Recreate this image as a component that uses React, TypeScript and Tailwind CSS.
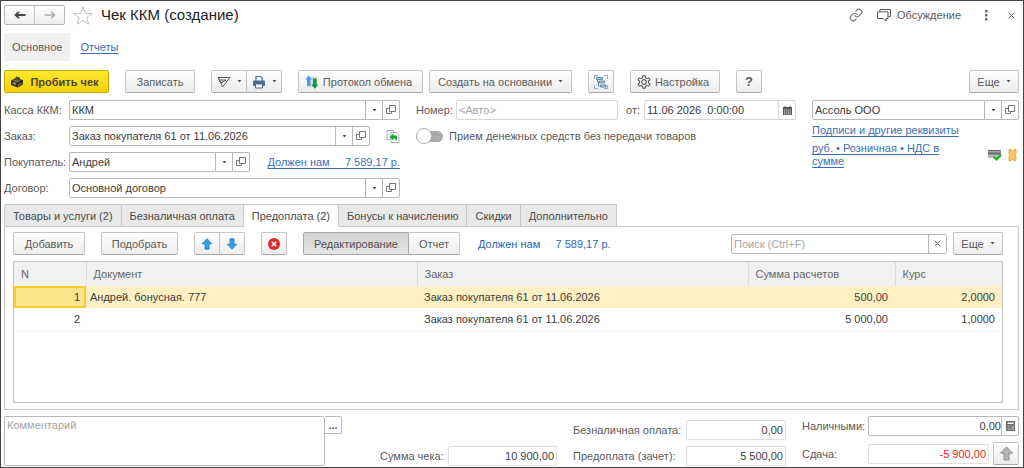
import React from 'react';

interface Row {
  n: number;
  doc: string;
  order: string;
  sum: string;
  rate: string;
}

const rows: Row[] = [
  { n: 1, doc: 'Андрей. бонусная. 777', order: 'Заказ покупателя 61 от 11.06.2026', sum: '500,00', rate: '2,0000' },
  { n: 2, doc: '', order: 'Заказ покупателя 61 от 11.06.2026', sum: '5 000,00', rate: '1,0000' },
];

const tabs = [
  'Товары и услуги (2)',
  'Безналичная оплата',
  'Предоплата (2)',
  'Бонусы к начислению',
  'Скидки',
  'Дополнительно',
];

const btn =
  'flex h-[23px] shrink-0 items-center justify-center rounded-xs border border-[#c4c4c4] border-b-[#a8a8a8] bg-linear-to-b from-white to-[#ececec] text-[#5a5a5a] whitespace-nowrap';

const Caret = () => (
  <svg viewBox="0 0 5 3" className="h-[3px] w-[5px] shrink-0" fill="#555">
    <path d="M.5 0h4L2.500 2.500z" />
  </svg>
);

const OpenIcon = () => (
  <svg viewBox="0 0 10 10" className="h-[10px] w-[10px]" fill="none" stroke="#777">
    <path d="M3.500 .5h6v6h-6zM3.500 3.500h-3v5h5v-2" />
  </svg>
);

const PrinterIcon = () => (
  <svg viewBox="0 0 14 14" className="h-[14px] w-[14px]">
    <path d="M4 6V1.500h4.500L10.500 3.500V6" fill="#fff" stroke="#4b6d93" strokeWidth="1.200" />
    <rect x="1" y="5.500" width="12" height="5.500" rx="1" fill="#4b6d93" />
    <path d="M3.500 9h7v4h-7z" fill="#fff" stroke="#4b6d93" />
  </svg>
);

const ReceiptPrinterIcon = () => (
  <svg viewBox="0 0 14 12" className="h-[12px] w-[14px]">
    <path d="M1 4.500L6 2l7 2v4.500L7.500 11.500 1 9z" fill="#3a2f1c" />
    <path d="M2.500 4.500l4-1.500 4.500 1.500-4 2z" fill="#6f6553" />
    <path d="M5 3.500l1-3 4 1v3z" fill="#54472c" />
    <circle cx="4.500" cy="7.500" r="1.200" fill="#b9a878" />
    <path d="M8 8.500l4-1.800v1.300L8 10z" fill="#7b6d4b" />
  </svg>
);

const SendIcon = () => (
  <svg viewBox="0 0 14 12" className="h-[12px] w-[14px]" fill="none" stroke="#555" strokeLinejoin="round">
    <path d="M1 1.500h12L5.500 11 4 7zM1 1.500L4 7l5-3H3" />
  </svg>
);

const ExchangeIcon = () => (
  <svg viewBox="0 0 14 14" className="h-[14px] w-[14px]">
    <path d="M2 1.500h10v11H2z" fill="#d5dbe3" />
    <path d="M3.700 .5L7.200 4.500H5.400V11H2V4.500H.2z" fill="#4a9cf0" />
    <path d="M9.800 13.800L6.300 9.500H8V3.500h3.600v6h1.700z" fill="#129a3a" />
  </svg>
);

const StructureIcon = () => (
  <svg viewBox="0 0 14 14" className="h-[14px] w-[14px]" fill="none" stroke="#5f86ad">
    <path d="M.5 4V.5H4M10 .5h3.500V4M.5 10v3.500H4M10 13.500h3.500V10" stroke="#8aa9c6" />
    <path d="M2.500 2.500h6v2h-6zM5.500 6h5v2h-5zM6.500 10h5.500v2h-5.500z" fill="#b8cde2" />
    <path d="M3.500 4.500V7h2M4.500 7v4h2" />
  </svg>
);

const GearIcon = () => (
  <svg viewBox="0 0 24 24" className="h-[14px] w-[14px]" fill="none" stroke="#5a5a5a" strokeWidth="1.900" strokeLinejoin="round">
    <path d="M10 1.500h4l.7 3.300 2.200 1.200 3.200-1 2 3.500-2.500 2.200v2.600l2.500 2.200-2 3.500-3.200-1-2.200 1.200-.7 3.300h-4l-.7-3.300L7.100 18l-3.200 1-2-3.500 2.500-2.200v-2.600L1.900 8.500l2-3.500 3.200 1 2.200-1.200z" />
    <circle cx="12" cy="12" r="4" />
  </svg>
);

const FillIcon = () => (
  <svg viewBox="0 0 14 13" className="h-[13px] w-[14px]">
    <path d="M1 .5h6.500v9H1z" fill="#f4f7fb" stroke="#9eb2c8" />
    <path d="M5 2.500h5.500l2.500 2.500v7.500H5z" fill="#fff" stroke="#9eb2c8" />
    <path d="M3.500 7L7.500 3.500v2h3.500v5H9.500V8.500h-2v2z" fill="#23a32b" />
  </svg>
);

const ArrowIcon = ({ down, gray }: { down?: boolean; gray?: boolean }) => (
  <svg
    viewBox="0 0 12 12"
    className={`${gray ? 'h-[15px] w-[15px]' : 'h-[12px] w-[12px]'} ${down ? 'rotate-180' : ''}`}
    fill={gray ? '#b4b4b4' : '#33a2ea'}
    stroke={gray ? '#8e8e8e' : '#2676b8'}
    strokeWidth=".8"
    strokeLinejoin="round"
  >
    <path d="M6 .7l4.800 5H8v5.500H4V5.700H1.200z" />
  </svg>
);

const CrossIcon = () => (
  <svg viewBox="0 0 7 7" className="h-[7px] w-[7px]" stroke="#666">
    <path d="M.7.7l5.600 5.600M6.300.7L.7 6.300" />
  </svg>
);

const CalendarIcon = () => (
  <svg viewBox="0 0 9 9" className="h-[9px] w-[9px]">
    <path d="M0 1h1.500V0h1v1h4V0h1v1H9v8H0z" fill="#555" />
    <path d="M1 4h7M1 6h7M1 7.800h7" stroke="#fff" strokeWidth=".8" strokeDasharray="1.200 .7" />
  </svg>
);

const CalcIcon = () => (
  <svg viewBox="0 0 9 10" className="h-[10px] w-[9px]">
    <path d="M0 0h9v10H0z" fill="#6a6a6a" />
    <path d="M1.500 1.500h6V3h-6z" fill="#fff" />
    <path d="M1.500 5h4M1.500 7h4M1.500 8.700h4" stroke="#ddd" strokeWidth=".9" strokeDasharray="1.200 .6" />
    <path d="M7 4.500v4.500" stroke="#ddd" />
  </svg>
);

interface ComboProps {
  id: string;
  value: string;
  label?: string;
  className?: string;
}

function Combo({ id, value, label, className = '' }: ComboProps) {
  return (
    <div className={`flex h-5 min-w-0 items-stretch rounded-xs border border-[#b8b8b8] bg-white ${className}`}>
      <input id={id} aria-label={label} defaultValue={value} className="min-w-0 flex-1 px-0.5 text-[#3c3c3c] outline-none" />
      <button aria-label="Выбрать" className="flex w-[17px] items-center justify-center border-l border-[#b8b8b8]">
        <Caret />
      </button>
      <button aria-label="Открыть" className="flex w-[17px] items-center justify-center border-l border-[#b8b8b8]">
        <OpenIcon />
      </button>
    </div>
  );
}

const roField = 'h-5 rounded-xs border border-[#dedede] bg-white px-0.5 text-right text-[#3c3c3c] outline-none';

export default function App() {
  return (
    <div className="flex min-h-screen flex-col border border-[#444444] bg-white pr-1 pl-[3px] font-['Liberation_Sans',Arial,sans-serif] text-[11px] leading-4 text-[#5a5a5a]">
      {/* Window title */}
      <header className="flex h-7 items-center">
        <div className="flex h-5 w-[61px] rounded-xs border border-[#b5b5b5] bg-linear-to-b from-white to-[#eeeeee]">
          <button aria-label="Назад" className="flex flex-1 items-center justify-center border-r border-[#c4c4c4]">
            <svg viewBox="0 0 12 8" className="h-2 w-3" fill="none" stroke="#444" strokeWidth="1.800">
              <path d="M11.500 4H1.500M5 .8L1.500 4 5 7.200" />
            </svg>
          </button>
          <button aria-label="Вперед" className="flex flex-1 items-center justify-center">
            <svg viewBox="0 0 12 8" className="h-2 w-3" fill="none" stroke="#aaa" strokeWidth="1.500">
              <path d="M.5 4h10M7 .8L10.500 4 7 7.200" />
            </svg>
          </button>
        </div>
        <button aria-label="В избранное" className="ml-2">
          <svg viewBox="0 0 20 19" className="h-[19px] w-5" fill="none" stroke="#bcc3c9" strokeLinejoin="round">
            <path d="M10 1l2.300 6.400 6.900.2-5.400 4.100 1.900 6.500L10 14.300l-5.700 3.900 1.900-6.500L.8 7.600l6.900-.2z" />
          </svg>
        </button>
        <h1 className="ml-2 text-[15px] text-[#222222]">Чек ККМ (создание)</h1>
        <div className="ml-auto flex items-center">
          <button aria-label="Ссылка">
            <svg viewBox="0 0 24 24" className="h-[14px] w-[14px]" fill="none" stroke="#777" strokeWidth="2" strokeLinecap="round">
              <path d="M10 13a5 5 0 0 0 7.540.54l3-3a5 5 0 0 0-7.070-7.070l-1.720 1.710" />
              <path d="M14 11a5 5 0 0 0-7.540-.54l-3 3a5 5 0 0 0 7.070 7.070l1.710-1.710" />
            </svg>
          </button>
          <button className="ml-3.5 flex items-center gap-1.5">
            <svg viewBox="0 0 14 13" className="h-[13px] w-[14px]" fill="none" stroke="#555" strokeLinejoin="round">
              <path d="M3 2.500V.5h10.500v7h-2" />
              <path d="M.5 2.800h10.500v6.700H9v2.800L6.200 9.500H.5z" />
            </svg>
            Обсуждение
          </button>
          <button aria-label="Меню" className="ml-6">
            <svg viewBox="0 0 3 11" className="h-[11px] w-[3px]" fill="#666">
              <path d="M0 0h2.500v2.500H0zM0 4h2.500v2.500H0zM0 8h2.500v2.500H0z" />
            </svg>
          </button>
          <button aria-label="Закрыть" className="mr-1 ml-5">
            <CrossIcon />
          </button>
        </div>
      </header>

      <nav className="mt-1 flex h-7 items-center gap-2.5">
        <a href="#main" className="flex h-full items-center rounded-xs bg-[#f0f0f0] px-2">
          Основное
        </a>
        <a href="#reports" className="text-[#3a6fb7] underline underline-offset-2">
          Отчеты
        </a>
      </nav>

      {/* Command bar */}
      <div className="mt-[9px] flex items-center">
        <button className="flex h-[23px] w-[105px] items-center justify-center gap-1.5 rounded-xs border border-[#c9a900] bg-linear-to-b from-[#ffe82e] to-[#f2d200] pr-1 font-bold text-[#4c4630]">
          <ReceiptPrinterIcon />
          Пробить чек
        </button>
        <button className={`${btn} ml-4 w-[70px]`}>Записать</button>
        <div className="ml-4 flex">
          <button aria-label="Отправить" className={`${btn} w-9 gap-1.5 rounded-r-none`}>
            <SendIcon />
            <Caret />
          </button>
          <button aria-label="Печать" className={`${btn} w-[35px] gap-1.5 rounded-l-none border-l-0`}>
            <PrinterIcon />
            <Caret />
          </button>
        </div>
        <button className={`${btn} ml-4 w-[125px] gap-1 pr-1`}>
          <ExchangeIcon />
          Протокол обмена
        </button>
        <button className={`${btn} ml-1.5 w-[143px] gap-1.5`}>
          Создать на основании
          <Caret />
        </button>
        <button aria-label="Структура подчиненности" className={`${btn} ml-4 w-[26px]`}>
          <StructureIcon />
        </button>
        <button className={`${btn} ml-4 w-[90px] gap-1 pr-1`}>
          <GearIcon />
          Настройка
        </button>
        <button className={`${btn} ml-4 w-[26px] text-[13px] font-bold`}>?</button>
        <button className={`${btn} ml-auto w-[50px] gap-1.5`}>
          Еще
          <Caret />
        </button>
      </div>

      {/* Document fields */}
      <div className="mt-[7px] flex">
        <div className="grid w-[396px] shrink-0 grid-cols-[65px_1fr] items-center gap-y-1.5">
          <label htmlFor="kassa">Касса ККМ:</label>
          <Combo id="kassa" value="ККМ" />
          <label htmlFor="order">Заказ:</label>
          <div className="flex items-center justify-between">
            <Combo id="order" value="Заказ покупателя 61 от 11.06.2026" className="w-[301px]" />
            <button aria-label="Заполнить по заказу">
              <FillIcon />
            </button>
          </div>
          <label htmlFor="buyer">Покупатель:</label>
          <div className="flex items-center justify-between">
            <Combo id="buyer" value="Андрей" className="w-[181px]" />
            <a href="#debt" className="whitespace-pre text-[#3a6fb7] underline underline-offset-2">
              {'Должен нам     7 589,17 р.'}
            </a>
          </div>
          <label htmlFor="contract">Договор:</label>
          <Combo id="contract" value="Основной договор" />
        </div>

        <div className="ml-4 flex w-[380px] shrink-0 flex-col gap-1.5">
          <div className="flex items-center">
            <label htmlFor="number" className="w-10 shrink-0">Номер:</label>
            <input id="number" placeholder="<Авто>" className="h-5 w-[162px] shrink-0 rounded-xs border border-[#d6d6d6] px-0.5 outline-none placeholder:text-[#a5a5a5]" />
            <label htmlFor="date" className="mr-1 ml-2 shrink-0">от:</label>
            <div className="flex h-5 min-w-0 flex-1 rounded-xs border border-[#d6d6d6]">
              <input id="date" defaultValue="11.06 2026  0:00:00" className="min-w-0 flex-1 px-0.5 text-[#3c3c3c] outline-none" />
              <button aria-label="Календарь" className="flex w-[17px] items-center justify-center border-l border-[#d6d6d6]">
                <CalendarIcon />
              </button>
            </div>
          </div>
          <label className="flex h-5 items-center gap-1.5">
            <input
              type="checkbox"
              role="switch"
              className="flex h-[11px] w-[27px] appearance-none items-center rounded-full bg-[#aaaaaa] before:h-4 before:w-4 before:rounded-full before:border before:border-[#b0b0b0] before:bg-white"
            />
            Прием денежных средств без передачи товаров
          </label>
        </div>

        <div className="ml-4 flex min-w-0 flex-1 flex-col">
          <Combo id="org" label="Организация" value="Ассоль ООО" />
          <a href="#sign" className="mt-0.5 text-[#3a6fb7] underline underline-offset-2">
            Подписи и другие реквизиты
          </a>
          <div className="mt-1 flex items-center justify-between">
            <a href="#price" className="w-[140px] leading-[13px] text-[#3a6fb7] underline underline-offset-2">
              руб. • Розничная • НДС в сумме
            </a>
            <div className="flex items-center gap-1.5 pr-0.5">
              <svg viewBox="0 0 14 12" className="h-[12px] w-[14px]">
                <path d="M0 1h13v8H0z" fill="#b9bcbe" />
                <path d="M0 1h13v1.200H0zM0 3.500h13v2H0z" fill="#666" />
                <path d="M5.500 7.500l3 3L13 5.800" fill="none" stroke="#1fb31f" strokeWidth="2" />
              </svg>
              <svg viewBox="0 0 9 12" className="h-[12px] w-[9px]">
                <path d="M1 .5h2L4.500 2 6 .5h2v4L7.300 6 8 7.500v4H6L4.500 10 3 11.500H1v-4L1.700 6 1 4.500z" fill="#f5c564" stroke="#dc9c38" strokeWidth=".8" strokeLinejoin="round" />
              </svg>
            </div>
          </div>
        </div>
      </div>

      {/* Tabs */}
      <div role="tablist" className="mt-1.5 flex h-[23px] items-stretch">
        {tabs.map((t, i) => (
          <button
            key={t}
            role="tab"
            aria-selected={i === 2}
            className={`border-t border-r border-b border-[#c6c6c6] px-2 whitespace-nowrap text-[#4a4a4a] first:rounded-tl-xs first:border-l last:rounded-tr-xs ${
              i === 2 ? 'border-b-white bg-white' : 'bg-[#e9e9e9]'
            }`}
          >
            {t}
          </button>
        ))}
        <div className="flex-1 border-b border-[#c6c6c6]" />
      </div>

      <section className="flex flex-1 flex-col border border-t-0 border-[#c6c6c6] pt-[5px] pr-[15px] pb-1.5 pl-2">
        <div className="flex items-center">
          <button className={`${btn} w-[72px]`}>Добавить</button>
          <button className={`${btn} ml-4 w-[77px]`}>Подобрать</button>
          <div className="ml-4 flex">
            <button aria-label="Вверх" className={`${btn} w-[26px] rounded-r-none`}>
              <ArrowIcon />
            </button>
            <button aria-label="Вниз" className={`${btn} w-[25px] rounded-l-none border-l-0`}>
              <ArrowIcon down />
            </button>
          </div>
          <button aria-label="Удалить" className={`${btn} ml-4 w-[26px]`}>
            <svg viewBox="0 0 12 12" className="h-3 w-3">
              <circle cx="6" cy="6" r="6" fill="#d92b2b" />
              <path d="M3.800 3.800l4.400 4.400M8.200 3.800L3.800 8.200" stroke="#fff" strokeWidth="1.500" />
            </svg>
          </button>
          <div className="ml-4 flex">
            <button className="h-[23px] w-[106px] rounded-l-xs border border-[#a8a8a8] bg-linear-to-b from-[#d2d2d2] to-[#e4e4e4] text-[#505050]">
              Редактирование
            </button>
            <button className={`${btn} w-[51px] rounded-l-none border-l-0`}>Отчет</button>
          </div>
          <a href="#debt" className="ml-[18px] whitespace-pre text-[#2a66b5]">
            {'Должен нам     7 589,17 р.'}
          </a>
          <div className="ml-auto flex h-5 w-[216px] rounded-xs border border-[#b8b8b8]">
            <input aria-label="Поиск" placeholder="Поиск (Ctrl+F)" className="min-w-0 flex-1 px-0.5 outline-none placeholder:text-[#a5a5a5]" />
            <button aria-label="Очистить" className="flex w-[18px] items-center justify-center border-l border-[#b8b8b8]">
              <CrossIcon />
            </button>
          </div>
          <button className={`${btn} ml-1.5 w-[50px] gap-1.5`}>
            Еще
            <Caret />
          </button>
        </div>

        <div className="mt-1.5 flex-1 border border-[#c2c2c2]">
          <table className="w-full table-fixed border-collapse">
            <colgroup>
              <col className="w-[72px]" />
              <col />
              <col />
              <col className="w-[147px]" />
              <col className="w-[107px]" />
            </colgroup>
            <thead>
              <tr className="h-6 bg-[#f1f1f1] text-left text-[#666666] *:border-r *:border-[#dcdcdc] *:px-[7px] *:font-normal">
                <th>N</th>
                <th>Документ</th>
                <th>Заказ</th>
                <th>Сумма расчетов</th>
                <th className="last:border-r-0">Курс</th>
              </tr>
            </thead>
            <tbody className="text-[#3c3c3c]">
              {rows.map((r, i) => (
                <tr key={r.n} className={i === 0 ? 'h-[22px] bg-[#fdf0c4]' : 'h-[23px] border-b border-[#f0f0f0]'}>
                  <td className={`pr-1.5 text-right ${i === 0 ? 'bg-[#fde38c] outline-2 -outline-offset-2 outline-[#f8cb30]' : ''}`}>{r.n}</td>
                  <td className="px-1">{r.doc}</td>
                  <td className="px-[7px]">{r.order}</td>
                  <td className="px-[7px] text-right">{r.sum}</td>
                  <td className="px-[7px] text-right">{r.rate}</td>
                </tr>
              ))}
            </tbody>
          </table>
        </div>
      </section>

      {/* Totals */}
      <footer className="mt-1.5 mb-px flex items-start">
        <textarea aria-label="Комментарий" placeholder="Комментарий" className="h-[50px] w-[321px] resize-none rounded-xs border border-[#b8b8b8] px-0.5 outline-none placeholder:text-[#a5a5a5]" />
        <button className="h-[18px] w-[17px] rounded-r-xs border border-l-0 border-[#b8b8b8] font-bold leading-3">...</button>
        <div className="ml-auto flex items-center gap-1 self-end">
          <label htmlFor="total" className="w-[64px]">Сумма чека:</label>
          <input id="total" readOnly value="10 900,00" className={`${roField} w-[109px]`} />
        </div>
        <div className="ml-4 grid grid-cols-[113px_100px] items-center gap-y-1.5 self-end">
          <label htmlFor="cashless">Безналичная оплата:</label>
          <input id="cashless" readOnly value="0,00" className={roField} />
          <label htmlFor="prepay">Предоплата (зачет):</label>
          <input id="prepay" readOnly value="5 500,00" className={roField} />
        </div>
        <div className="ml-4 grid grid-cols-[66px_151px] items-center gap-y-1.5">
          <label htmlFor="cash">Наличными:</label>
          <div className="flex h-5 rounded-xs border border-[#b8b8b8]">
            <input id="cash" defaultValue="0,00" className="min-w-0 flex-1 text-right text-[#3c3c3c] outline-none" />
            <button aria-label="Калькулятор" className="flex w-[17px] items-center justify-center border-l border-[#b8b8b8]">
              <CalcIcon />
            </button>
          </div>
          <label htmlFor="change">Сдача:</label>
          <div className="flex items-center gap-1">
            <input id="change" readOnly value="-5 900,00" className="h-5 min-w-0 flex-1 rounded-xs border border-[#dedede] px-0.5 text-right text-[#ff2020] outline-none" />
            <button aria-label="Поднять" className={`${btn} w-[26px]`}>
              <ArrowIcon gray />
            </button>
          </div>
        </div>
      </footer>
    </div>
  );
}
